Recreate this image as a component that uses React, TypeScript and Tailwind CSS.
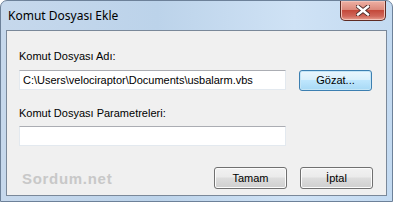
import { useState } from 'react';

const WinButton = ({ label, focused = false, className = '' }: { label: string; focused?: boolean; className?: string }) => {
  const skin = focused
    ? 'border-[#3c7fb1] bg-[linear-gradient(#eaf6fd_0%,#d9f0fc_45%,#bee6fd_50%,#a7d9f5_100%)] shadow-[inset_0_0_0_1px_#c4e5f6]'
    : 'border-[#707070] bg-[linear-gradient(#f2f2f2_0%,#ebebeb_45%,#dddddd_50%,#cfcfcf_100%)] shadow-[inset_0_0_0_1px_#fcfcfc]';
  return (
    <button className={`flex items-center justify-center rounded-[3px] border text-[11px] text-black ${skin} ${className}`}>
      {label}
    </button>
  );
};

const TextBox = ({ value, onChange }: { value: string; onChange: (v: string) => void }) => (
  <input
    value={value}
    onChange={(e) => onChange(e.target.value)}
    className="h-[20px] w-[267px] border border-[#e3e9ef] border-t-[#abadb3] bg-white px-[3px] text-[11px] text-black outline-none"
  />
);

const App = () => {
  const [path, setPath] = useState('C:\\Users\\velociraptor\\Documents\\usbalarm.vbs');
  const [params, setParams] = useState('');

  return (
    <div className="flex h-[202px] w-[393px] flex-col overflow-hidden rounded-t-[7px] border border-[#6d8199] bg-[linear-gradient(90deg,#c6d8ec_0%,#bcd3ea_40%,#cfe2f5_75%,#c3daf1_100%)] font-['Liberation_Sans',Arial,sans-serif]">
      {/* title bar */}
      <div className="flex h-[29px] shrink-0 items-start justify-between">
        <span className="pl-[7px] pt-[7px] font-['Noto_Sans',sans-serif] text-[12px] leading-[16px] text-black">
          Komut Dosyası Ekle
        </span>
        <button className="mr-[6px] flex h-[20px] w-[46px] items-center justify-center rounded-b-[5px] border border-t-0 border-[#5e2b24] bg-[linear-gradient(#eeb0a4_0%,#dc8a7c_45%,#c4493a_50%,#d0675a_80%,#e8a090_100%)] shadow-[inset_0_0_0_1px_#f2c2b8]">
          <svg width="14" height="11" viewBox="0 0 14 11">
            <path
              d="M2 1.5 L12 9.5 M12 1.5 L2 9.5"
              stroke="#4a2a28"
              strokeWidth="4.2"
              strokeLinecap="square"
            />
            <path
              d="M2 1.5 L12 9.5 M12 1.5 L2 9.5"
              stroke="#ffffff"
              strokeWidth="2.4"
              strokeLinecap="square"
            />
          </svg>
        </button>
      </div>

      {/* client area */}
      <div className="mx-[5px] mb-[5px] flex flex-1 flex-col border border-[#7a8899] bg-[#f0f0f0] pl-[12px] pr-[13px]">
        <div className="mt-[19px] text-[11px] leading-[13px] text-black">Komut Dosyası Adı:</div>
        <div className="mt-[5px] flex items-center gap-[13px]">
          <TextBox value={path} onChange={setPath} />
          <WinButton label="Gözat..." focused className="mt-[2px] h-[21px] w-[73px]" />
        </div>

        <div className="mt-[16px] text-[11px] leading-[13px] text-black">Komut Dosyası Parametreleri:</div>
        <div className="mt-[3px]">
          <TextBox value={params} onChange={setParams} />
        </div>

        <div className="mt-[19px] flex items-center">
          <span className="ml-[3px] mt-[2px] text-[15px] font-bold tracking-[0.7px] text-[#c8c8c8]">
            Sordum.net
          </span>
          <WinButton label="Tamam" className="ml-auto h-[22px] w-[73px]" />
          <WinButton label="İptal" className="ml-[13px] h-[22px] w-[73px]" />
        </div>
      </div>
    </div>
  );
};

export default App;
